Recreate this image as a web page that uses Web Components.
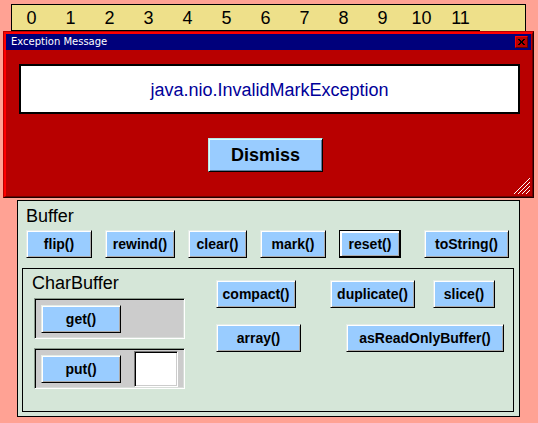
<!DOCTYPE html>
<html lang="en">
<head>
<meta charset="utf-8">
<title>Buffer</title>
<style>
  html { background: #ffa294; }
  body { margin: 0; padding: 4px 0 6px; font-family: "Liberation Sans", Arial, sans-serif; color: #000; }
</style>
</head>
<body>
<buffer-app></buffer-app>
<script>
class BaseElement extends HTMLElement {
  constructor() {
    super();
    this.attachShadow({ mode: "open" }).innerHTML = this.render();
  }
}

customElements.define("index-ruler", class extends BaseElement {
  render() {
    const cells = Array.from({ length: 12 }, (_, i) => `<span>${i}</span>`).join("");
    return `<style>
      :host { display: flex; background: #eee08a; border: 1px solid #000; border-bottom: 0; }
      span { width: 39px; height: 26px; line-height: 26px; box-sizing: border-box; border-bottom: 1px solid #000; text-align: center; font-size: 18px; }
    </style>${cells}`;
  }
});

customElements.define("bevel-button", class extends BaseElement {
  render() {
    return `<style>
      :host { display: block; height: 28px; }
      button { display: block; width: 100%; height: 100%; margin: 0; padding: 0; border: 1px solid; border-color: #e4ece6 #000 #000 #e4ece6;
        border-radius: 0; background: #99ccff; color: #000; font: bold 14px/24px "Liberation Sans", Arial, sans-serif;
        box-shadow: inset 1px 1px #fff, inset -1px -1px #aaa; white-space: nowrap; }
      :host([active]) button { border-color: #000; box-shadow: inset -1px -1px #000, inset 1px 1px #fff, inset 2px 2px #fff, inset -2px -2px #aaa; }
      :host([large]) { height: 34px; }
      :host([large]) button { font-size: 18px; line-height: 30px; border-color: #b8e6e6 #000 #000 #b8e6e6; box-shadow: inset 1px 1px #d8ffff, inset -1px -1px #5c7a99; }
    </style><button type="button"><slot></slot></button>`;
  }
});

customElements.define("message-dialog", class extends BaseElement {
  render() {
    return `<style>
      :host { display: block; background: #b80000; border: 1px solid; border-color: #b80000 #200000 #200000 #b80000; }
      .frame { border: solid; border-width: 2px 1px 1px 2px; border-color: #f00 #700000 #700000 #f00; }
      header { display: flex; align-items: center; justify-content: space-between; height: 16px; margin-right: 1px; padding: 0 3px 0 5px; background: #00007b; color: #fff; font: 10px/16px "DejaVu Sans", sans-serif; }
      header button { display: grid; place-items: center; width: 13px; height: 12px; padding: 0; border: 1px solid; border-color: #f00 #600000 #600000 #f00; border-radius: 0; background: #b80000; }
      main { display: flex; flex-direction: column; align-items: center; padding: 14px 12px 1px 13px; }
      .message { align-self: stretch; height: 46px; border: 2px solid #000; background: #fff; color: #000099; text-align: center; font-size: 18px; line-height: 48px; }
      bevel-button { width: 115px; margin: 24px 8px 0 0; }
      .grip { align-self: flex-end; margin: 6px -11px 0 0; display: block; }
    </style>
    <div class="frame">
      <header><span><slot name="title"></slot></span>
        <button type="button" aria-label="Close"><svg width="7" height="6" viewBox="0 0 7 6" shape-rendering="crispEdges"><path d="M0 0h2v1H0zM5 0h2v1H5zM1 1h2v1H1zM4 1h2v1H4zM2 2h3v2H2zM1 4h2v1H1zM4 4h2v1H4zM0 5h2v1H0zM5 5h2v1H5z"/></svg></button>
      </header>
      <main>
        <div class="message"><slot></slot></div>
        <bevel-button large>Dismiss</bevel-button>
        <svg class="grip" width="17" height="17" viewBox="0 0 17 17" shape-rendering="crispEdges" aria-hidden="true"><path d="M0 16L16 0M4 16L16 4M8 16L16 8M12 16L16 12" stroke="#fff"/></svg>
      </main>
    </div>`;
  }
});

customElements.define("group-panel", class extends BaseElement {
  render() {
    return `<style>
      :host { display: block; border: 1px solid #000; background: #d5e6d8; }
      h2 { margin: 0; font-size: 18px; font-weight: normal; line-height: 20px; }
      :host([inner]) h2 { padding-left: 9px; }
    </style><h2><slot name="label"></slot></h2><slot></slot>`;
  }
});

customElements.define("sunken-row", class extends BaseElement {
  render() {
    return `<style>
      :host { display: flex; align-items: center; justify-content: space-between; box-sizing: border-box; width: 151px; height: 41px; padding: 0 6px;
        border: 1px solid; border-color: #8a9a8c #fff #fff #8a9a8c; background: #ccc; box-shadow: inset 1px 1px #000, inset -1px -1px #d8ddd9; }
    </style><slot></slot>`;
  }
});

customElements.define("buffer-app", class extends BaseElement {
  render() {
    return `<style>
      :host { display: block; }
      index-ruler { margin: 0 12px 0 11px; }
      message-dialog { margin: 0 4px 0 3px; }
      .outer { margin: 2px 18px 0 17px; padding: 5px 5px 4px 4px; }
      .outer > .row { padding: 4px 5px 10px 4px; gap: 13px; }
      [slot=label] { padding-left: 4px; }
      .inner [slot=label] { padding-left: 0; }
      .row { display: flex; align-items: center; }
      .end { margin-left: auto; }
      .inner { padding: 4px 9px 22px 0; }
      .columns { display: flex; gap: 31px; padding: 0 0 0 11px; }
      .rows { display: grid; gap: 9px; padding-top: 5px; }
      .methods { flex: 1; display: flex; flex-direction: column; gap: 16px; margin-top: -13px; }
      .methods .row { justify-content: space-between; }
      .pair { display: flex; gap: 18px; margin-right: 9px; }
      .w1 { width: 59px } .w2 { width: 62px } .w3 { width: 66px } .w4 { width: 70px } .w5 { width: 80px } .w6 { width: 85px } .w7 { width: 158px }
      input { box-sizing: border-box; width: 44px; height: 36px; padding: 0 4px; border: 1px solid; border-color: #777 #fff #fff #777; border-radius: 0;
        background: #fff; box-shadow: inset 1px 1px #000, inset -1px -1px #ccc; font: 18px "Liberation Sans", sans-serif; }
    </style>
    <index-ruler></index-ruler>
    <message-dialog role="dialog" aria-label="Exception Message"><span slot="title">Exception Message</span>java.nio.InvalidMarkException</message-dialog>
    <group-panel class="outer">
      <span slot="label" style="display:block">Buffer</span>
      <div class="row">
        <bevel-button class="w3">flip()</bevel-button>
        <bevel-button class="w4">rewind()</bevel-button>
        <bevel-button class="w1">clear()</bevel-button>
        <bevel-button class="w3">mark()</bevel-button>
        <bevel-button class="w2" active>reset()</bevel-button>
        <bevel-button class="w6 end">toString()</bevel-button>
      </div>
      <group-panel class="inner" inner>
        <span slot="label">CharBuffer</span>
        <div class="columns">
          <div class="rows">
            <sunken-row><bevel-button class="w5">get()</bevel-button></sunken-row>
            <sunken-row><bevel-button class="w5">put()</bevel-button><input type="text" aria-label="put() character"></sunken-row>
          </div>
          <div class="methods">
            <div class="row"><bevel-button class="w5">compact()</bevel-button><div class="pair"><bevel-button class="w6">duplicate()</bevel-button><bevel-button class="w2">slice()</bevel-button></div></div>
            <div class="row"><bevel-button class="w6">array()</bevel-button><bevel-button class="w7">asReadOnlyBuffer()</bevel-button></div>
          </div>
        </div>
      </group-panel>
    </group-panel>`;
  }
});
</script>
</body>
</html>
